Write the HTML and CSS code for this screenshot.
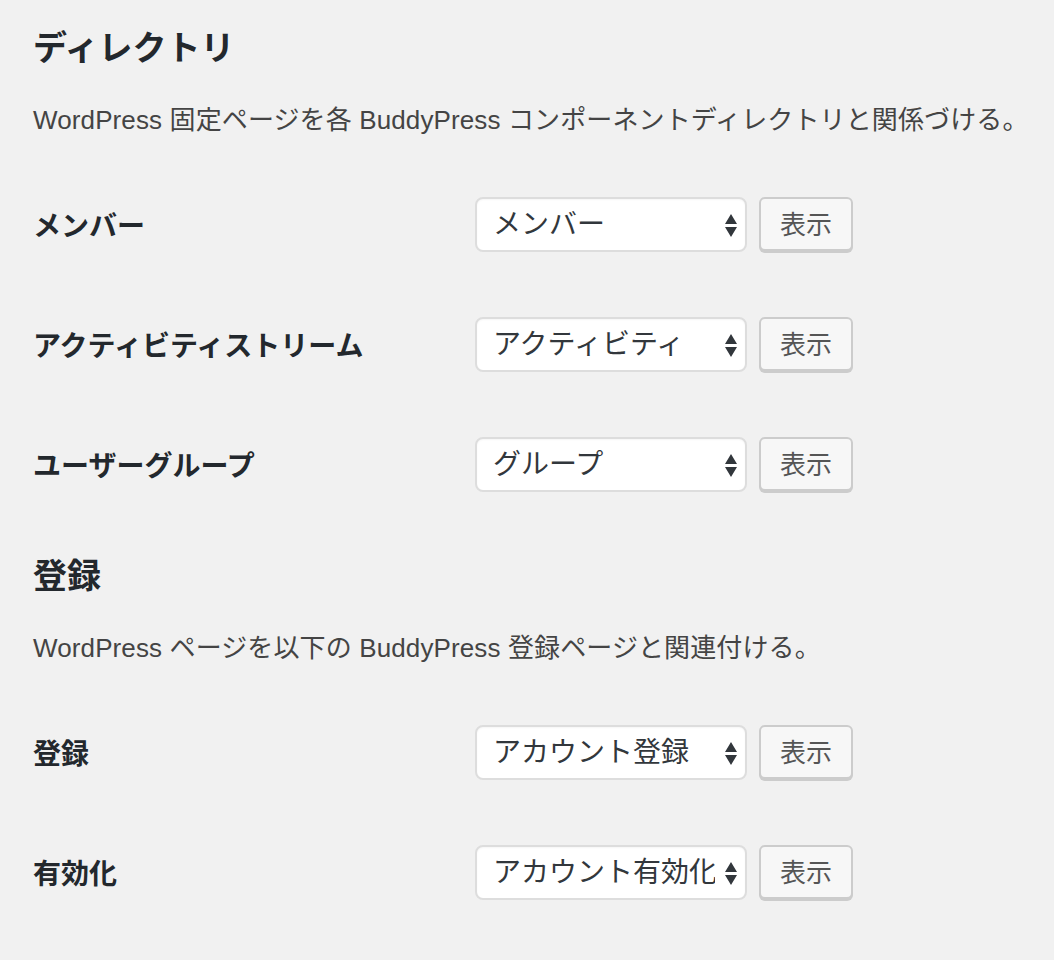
FILE: index.html
```html
<!DOCTYPE html>
<html lang="ja">
<head>
    <meta charset="UTF-8">
    <title>BuddyPress ページ設定</title>
    <link rel="stylesheet" href="styles.css">
</head>
<body>
    <div class="wrap">
      <h2 class="section-title first">ディレクトリ</h2>
      <p class="description">WordPress 固定ページを各 BuddyPress コンポーネントディレクトリと関係づける。</p>

      <div class="form-table">
        <div class="form-row">
          <div class="label">メンバー</div>
          <div class="field">
            <div class="select-wrap">
              <select class="page-select"><option>メンバー</option></select>
              <svg class="arrows" width="12" height="23" viewBox="0 0 12 23"><path d="M6 0L12 10H0z M0 13H12L6 23z" fill="#32373c"/></svg>
            </div>
            <button class="button">表示</button>
          </div>
        </div>
        <div class="form-row">
          <div class="label">アクティビティストリーム</div>
          <div class="field">
            <div class="select-wrap">
              <select class="page-select"><option>アクティビティ</option></select>
              <svg class="arrows" width="12" height="23" viewBox="0 0 12 23"><path d="M6 0L12 10H0z M0 13H12L6 23z" fill="#32373c"/></svg>
            </div>
            <button class="button">表示</button>
          </div>
        </div>
        <div class="form-row">
          <div class="label">ユーザーグループ</div>
          <div class="field">
            <div class="select-wrap">
              <select class="page-select"><option>グループ</option></select>
              <svg class="arrows" width="12" height="23" viewBox="0 0 12 23"><path d="M6 0L12 10H0z M0 13H12L6 23z" fill="#32373c"/></svg>
            </div>
            <button class="button">表示</button>
          </div>
        </div>
      </div>

      <h2 class="section-title">登録</h2>
      <p class="description">WordPress ページを以下の BuddyPress 登録ページと関連付ける。</p>

      <div class="form-table">
        <div class="form-row">
          <div class="label">登録</div>
          <div class="field">
            <div class="select-wrap">
              <select class="page-select"><option>アカウント登録</option></select>
              <svg class="arrows" width="12" height="23" viewBox="0 0 12 23"><path d="M6 0L12 10H0z M0 13H12L6 23z" fill="#32373c"/></svg>
            </div>
            <button class="button">表示</button>
          </div>
        </div>
        <div class="form-row">
          <div class="label">有効化</div>
          <div class="field">
            <div class="select-wrap">
              <select class="page-select"><option>アカウント有効化</option></select>
              <svg class="arrows" width="12" height="23" viewBox="0 0 12 23"><path d="M6 0L12 10H0z M0 13H12L6 23z" fill="#32373c"/></svg>
            </div>
            <button class="button">表示</button>
          </div>
        </div>
      </div>
    </div>
</body>
</html>
```

FILE: styles.css
```css
/* General Styles */
body {
    font-family: "Liberation Sans", "Noto Sans CJK JP", sans-serif;
    background: #f1f1f1;
    margin: 0;
    color: #23282d;
}

.wrap {
    padding: 0 0 0 33px;
}

.section-title {
    font-size: 34px;
    font-weight: bold;
    line-height: 43px;
    margin: 31px 0 0;
    color: #23282d;
}

.section-title.first {
    margin-top: 27px;
}

.description {
    font-size: 26px;
    line-height: 39px;
    letter-spacing: 0.12px;
    color: #444;
    margin: 31px 0 24px;
}

/* Rows */
.form-row {
    display: flex;
    align-items: center;
    height: 120px;
}

.label {
    width: 442px;
    font-size: 28px;
    font-weight: bold;
    color: #23282d;
}

.field {
    display: flex;
    align-items: center;
    gap: 12px;
}

.select-wrap {
    position: relative; /* arrows sit over the select */
}

.page-select {
    appearance: none;
    -webkit-appearance: none;
    width: 272px;
    height: 55px;
    padding: 0 30px 0 16px;
    font-family: inherit;
    font-size: 28px;
    color: #32373c;
    background: #fff;
    border: 2px solid #ddd;
    border-radius: 8px;
    box-shadow: inset 0 1px 2px rgba(0, 0, 0, 0.04);
    outline: none;
}

.arrows {
    position: absolute;
    right: 10px;
    top: 17px;
    pointer-events: none;
}

.button {
    height: 54px;
    width: 94px;
    padding: 0 0 3px;
    font-family: inherit;
    font-size: 26px;
    color: #555;
    background: #f7f7f7;
    border: 2px solid #ccc;
    border-radius: 6px;
    box-shadow: 0 2px 0 #ccc;
    cursor: pointer;
}
```
